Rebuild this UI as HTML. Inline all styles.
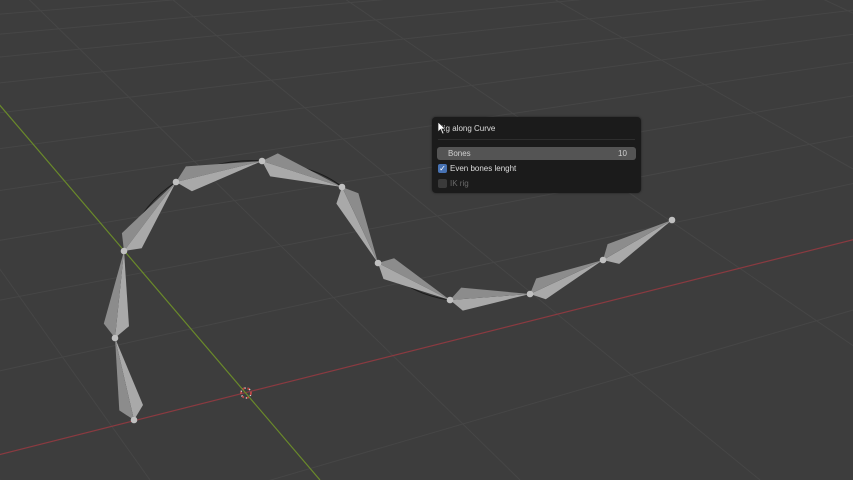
<!DOCTYPE html>
<html><head><meta charset="utf-8"><style>
html,body{margin:0;padding:0;width:853px;height:480px;overflow:hidden;background:#3d3d3d;font-family:"Liberation Sans",sans-serif}
#p{position:absolute;left:432px;top:117px;width:209px;height:76px;background:#1b1b1b;border-radius:4px;box-shadow:0 0 2px rgba(0,0,0,.5)}
.t{position:absolute;color:#dcdcdc;font-size:8px}
</style></head><body>
<svg width="853" height="480" style="position:absolute;left:0;top:0;overflow:hidden">
<g stroke="#464646" stroke-width="1" fill="none">
<line x1="2600" y1="-200" x2="-10" y2="562"/>
<line x1="2600" y1="-200" x2="-10" y2="373"/>
<line x1="2600" y1="-200" x2="-10" y2="302"/>
<line x1="2600" y1="-200" x2="-10" y2="242"/>
<line x1="2600" y1="-200" x2="-10" y2="192"/>
<line x1="2600" y1="-200" x2="-10" y2="150"/>
<line x1="2600" y1="-200" x2="-10" y2="114"/>
<line x1="2600" y1="-200" x2="-10" y2="84"/>
<line x1="2600" y1="-200" x2="-10" y2="58"/>
<line x1="2600" y1="-200" x2="-10" y2="35"/>
<line x1="2600" y1="-200" x2="-10" y2="15"/>
<line x1="-700" y1="-714" x2="520" y2="480"/>
<line x1="-700" y1="-714" x2="760" y2="480"/>
<line x1="-700" y1="-714" x2="1050" y2="480"/>
<line x1="-700" y1="-714" x2="1400" y2="480"/>
<line x1="-700" y1="-714" x2="1850" y2="480"/>
<line x1="-700" y1="-714" x2="2400" y2="480"/>
<line x1="-700" y1="-714" x2="3100" y2="480"/>
<line x1="-700" y1="-714" x2="150" y2="480"/>
<line x1="-700" y1="-714" x2="0" y2="480"/>
</g>
<line x1="-10" y1="457" x2="860" y2="238" stroke="#8a3a40" stroke-width="1.2"/>
<line x1="-700" y1="-714" x2="320" y2="480" stroke="#6a8a2a" stroke-width="1.2"/>
<circle cx="246" cy="393" r="5" fill="none" stroke="#e0e0e0" stroke-width="1.5" stroke-dasharray="3 2"/>
<circle cx="246" cy="393" r="5" fill="none" stroke="#c03030" stroke-width="1.5" stroke-dasharray="2 3"/>
<path d="M134 420 L115 338 L124 251 Q140 205 176 182 Q215 158 262 161 Q315 165 342 187 Q360 225 378 263 Q410 295 450 300 L530 294 L603 260 L672 220" fill="none" stroke="#1a1a1a" stroke-width="1"/>
<g stroke="none">
<polygon points="134,420 143,405 115,338" fill="#a9a9a9"/><polygon points="134,420 119.3,410.4 115,338" fill="#8c8c8c"/>
<polygon points="115,338 129,326.2 124,251" fill="#a9a9a9"/><polygon points="115,338 103.8,323.6 124,251" fill="#8c8c8c"/>
<polygon points="124,251 141.7,248.2 176,182" fill="#a9a9a9"/><polygon points="124,251 121.9,233.1 176,182" fill="#8c8c8c"/>
<polygon points="176,182 191.9,191.3 262,161" fill="#a9a9a9"/><polygon points="176,182 185.9,166.4 262,161" fill="#8c8c8c"/>
<polygon points="262,161 270.2,176.4 342,187" fill="#a9a9a9"/><polygon points="262,161 277.8,153.4 342,187" fill="#8c8c8c"/>
<polygon points="342,187 336.4,203.6 378,263" fill="#a9a9a9"/><polygon points="342,187 358.4,193.2 378,263" fill="#8c8c8c"/>
<polygon points="378,263 383.5,279 450,300" fill="#a9a9a9"/><polygon points="378,263 394.1,258.2 450,300" fill="#8c8c8c"/>
<polygon points="450,300 462.8,310.6 530,294" fill="#a9a9a9"/><polygon points="450,300 461.2,287.6 530,294" fill="#8c8c8c"/>
<polygon points="530,294 545.8,299.3 603,260" fill="#a9a9a9"/><polygon points="530,294 536.2,278.5 603,260" fill="#8c8c8c"/>
<polygon points="603,260 619.2,263.9 672,220" fill="#a9a9a9"/><polygon points="603,260 607.6,244.1 672,220" fill="#8c8c8c"/>
</g>
<g fill="#c0c0c0">
<circle cx="134" cy="420" r="3.3"/><circle cx="115" cy="338" r="3.3"/><circle cx="124" cy="251" r="3.3"/><circle cx="176" cy="182" r="3.3"/><circle cx="262" cy="161" r="3.3"/><circle cx="342" cy="187" r="3.3"/><circle cx="378" cy="263" r="3.3"/><circle cx="450" cy="300" r="3.3"/><circle cx="530" cy="294" r="3.3"/><circle cx="603" cy="260" r="3.3"/><circle cx="672" cy="220" r="3.3"/>
</g>
</svg>
<div id="p">
<div class="t" style="left:6px;top:7px">Rig along Curve</div>
<div style="position:absolute;left:6px;top:22px;width:197px;height:1px;background:#2e2e2e"></div>
<div style="position:absolute;left:5px;top:30px;width:199px;height:13px;background:#545454;border-radius:3px"></div>
<div class="t" style="left:16px;top:32px;color:#d0d0d0">Bones</div>
<div class="t" style="left:186px;top:32px;color:#d0d0d0">10</div>
<div style="position:absolute;left:6px;top:47px;width:9px;height:9px;background:#4772b3;border-radius:2px;color:#fff;font-size:8px;line-height:9px;text-align:center">✓</div>
<div class="t" style="left:18px;top:47px">Even bones lenght</div>
<div style="position:absolute;left:6px;top:62px;width:9px;height:9px;background:#3a3a3a;border-radius:2px"></div>
<div class="t" style="left:18px;top:62px;color:#6a6a6a">IK rig</div>
</div>
<svg width="10" height="14" style="position:absolute;left:437px;top:121px"><path d="M1 1 L1 11 L3.5 8.5 L5.5 13 L7 12.3 L5 8 L8.5 8 Z" fill="#fff" stroke="#222" stroke-width=".7"/></svg>
</body></html>
